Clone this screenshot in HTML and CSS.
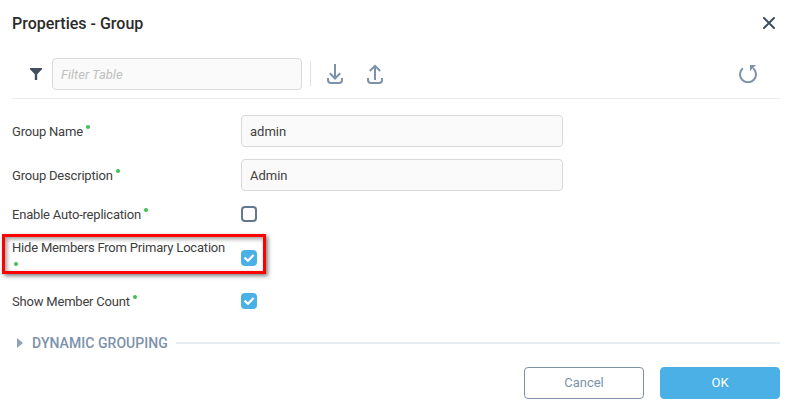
FILE: index.html
```html
<!DOCTYPE html>
<html lang="en">
  <head>
    <meta charset="UTF-8" />
    <meta name="viewport" content="width=device-width, initial-scale=1.0" />
    <title>Properties - Group</title>
    <link rel="stylesheet" href="styles.css">
  </head>

  <body>
    <div class="dialog">
      <div class="header">
        <h1>Properties - Group</h1>
        <button class="iconButton" aria-label="Close">
          <svg width="12" height="12" viewBox="0 0 12 12">
            <path d="M1 1L11 11M11 1L1 11" fill="none" stroke="#40505f" stroke-width="2" stroke-linecap="round" />
          </svg>
        </button>
      </div>

      <div class="toolbar">
        <svg class="filterIcon" width="12" height="12" viewBox="0 0 12 12">
          <path d="M0 0H12V1.3L7.2 6.3V12H4.8V6.3L0 1.3Z" fill="#40505f" />
        </svg>
        <input class="filter" type="text" placeholder="Filter Table" />
        <span class="separator"></span>
        <button class="iconButton" aria-label="Import">
          <svg width="16" height="20" viewBox="0 0 16 20">
            <path d="M8 0V14.5M2.8 9.3L8 14.5L13.2 9.3M1 14V16Q1 19 4 19H12Q15 19 15 16V14" fill="none" stroke="#7c92ab" stroke-width="2" />
          </svg>
        </button>
        <button class="iconButton exportButton" aria-label="Export">
          <svg width="16" height="20" viewBox="0 0 16 20">
            <path d="M8 16V2M2.8 7L8 1.8L13.2 7M1 14V16Q1 19 4 19H12Q15 19 15 16V14" fill="none" stroke="#7c92ab" stroke-width="2" />
          </svg>
        </button>
        <button class="iconButton refreshButton" aria-label="Refresh">
          <svg width="18" height="18" viewBox="0 0 18 18">
            <path d="M3.8 3.2A8 8 0 1 0 14.2 3.2" fill="none" stroke="#7c92ab" stroke-width="2" />
            <path d="M11 0H17L11 6Z" fill="#7c92ab" />
          </svg>
        </button>
      </div>

      <div class="form">
        <div class="row">
          <label for="name">Group Name<i class="dot"></i></label>
          <input class="field" id="name" type="text" value="admin" />
        </div>
        <div class="row">
          <label for="description">Group Description<i class="dot"></i></label>
          <input class="field" id="description" type="text" value="Admin" />
        </div>
        <div class="row checkRow">
          <label>Enable Auto-replication<i class="dot"></i></label>
          <span class="checkbox"></span>
        </div>
        <div class="row hideRow">
          <label>Hide Members From Primary Location <i class="dot"></i></label>
          <span class="checkbox checked">
            <svg width="16" height="16" viewBox="0 0 16 16">
              <path d="M3.5 7.6L7 10.8L12.6 5" fill="none" stroke="#fff" stroke-width="2.2" />
            </svg>
          </span>
          <div class="highlight"></div>
        </div>
        <div class="row checkRow">
          <label>Show Member Count<i class="dot"></i></label>
          <span class="checkbox checked">
            <svg width="16" height="16" viewBox="0 0 16 16">
              <path d="M3.5 7.6L7 10.8L12.6 5" fill="none" stroke="#fff" stroke-width="2.2" />
            </svg>
          </span>
        </div>
      </div>

      <div class="section">
        <span class="arrow"></span>
        <h2>DYNAMIC GROUPING</h2>
        <span class="line"></span>
      </div>

      <div class="footer">
        <button class="button">Cancel</button>
        <button class="button primary">OK</button>
      </div>
    </div>
  </body>
</html>
```
FILE: styles.css
```css
* {
  box-sizing: border-box;
}

body {
  margin: 0;
  background-color: #fff;
  color: #404040;
  font-family: Roboto, "Liberation Sans", sans-serif;
  font-size: 13px;
  overflow: hidden;
}

.dialog {
  height: 411px;
  padding: 0 12px;
}

.header {
  display: flex;
  justify-content: space-between;
  align-items: center;
  height: 46px;
  padding-right: 5px;
}

h1 {
  margin: 0;
  color: #2b2b2b;
  font-size: 16px;
  font-weight: 500;
}

.iconButton {
  display: flex;
  padding: 0;
  border: none;
  background: none;
}

.toolbar {
  display: flex;
  align-items: center;
  height: 53px;
  padding: 4px 23px 0 18px;
  border-bottom: 1px solid #ebebeb;
}

input {
  height: 32px;
  padding: 0 8px;
  border: 1px solid #d9d9d9;
  border-radius: 4px;
  background-color: #fafafa;
  color: #404040;
  font: inherit;
}

.filter {
  width: 250px;
  margin-left: 10px;
}

.filter::placeholder {
  color: #c0c0c0;
  font-style: italic;
}

.separator {
  width: 1px;
  height: 24px;
  margin: 0 16px 0 8px;
  background-color: #e0e0e0;
}

.exportButton {
  margin-left: 24px;
}

.refreshButton {
  margin-left: auto;
}

.form {
  padding-top: 16px;
}

.row {
  display: flex;
  align-items: center;
  position: relative;
  height: 32px;
  margin-bottom: 12px;
}

label {
  width: 229px;
  padding-right: 12px;
  letter-spacing: -0.2px;
  line-height: 17px;
}

.dot {
  display: inline-block;
  width: 4px;
  height: 4px;
  margin-left: 3px;
  border-radius: 50%;
  background-color: #3ebf54;
  vertical-align: 7px;
}

.field {
  width: 322px;
}

.checkRow {
  height: 22px;
}

.checkbox {
  width: 16px;
  height: 16px;
  border: 2px solid #61788f;
  border-radius: 4px;
}

.checked {
  border: none;
  background-color: #4bb0e6;
}

.checked svg {
  display: block;
}

.hideRow {
  height: 42px;
  margin-bottom: 11px;
}

.hideRow label {
  padding-bottom: 4px;
}

.hideRow .dot {
  margin-left: 2px;
  vertical-align: 3px;
}

/* red frame around the row */
.highlight {
  position: absolute;
  top: -3px;
  left: -10px;
  width: 264px;
  height: 40px;
  border: 3px solid #fe0000;
  box-shadow: 2px 2px 4px rgba(0, 0, 0, 0.5), inset 2px 2px 4px rgba(0, 0, 0, 0.4);
}

.section {
  display: flex;
  align-items: center;
  height: 20px;
  margin-top: 21px;
  padding-left: 5px;
}

.arrow {
  border-top: 5px solid transparent;
  border-bottom: 5px solid transparent;
  border-left: 6px solid #8fa3b8;
}

h2 {
  margin: 0 8px 0 9px;
  padding-bottom: 1px;
  color: #7c92ab;
  font-size: 14px;
  font-weight: 500;
  letter-spacing: 0.05px;
}

.line {
  flex: 1;
  height: 2px;
  background-color: #e6edf3;
}

.footer {
  display: flex;
  justify-content: flex-end;
  gap: 16px;
  margin-top: 14px;
}

.button {
  width: 120px;
  height: 32px;
  padding: 0 0 2px;
  border: 1px solid #7c92ab;
  border-radius: 4px;
  background-color: #fff;
  color: #7c92ab;
  font: inherit;
}

.primary {
  border-color: #4bb0e6;
  background-color: #4bb0e6;
  color: #fff;
}
```
